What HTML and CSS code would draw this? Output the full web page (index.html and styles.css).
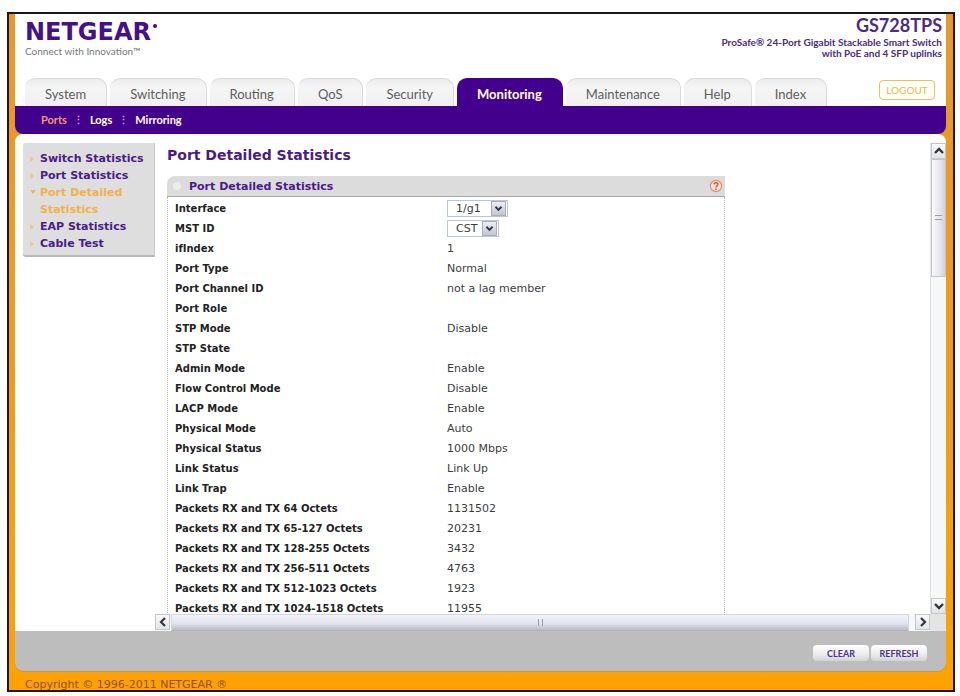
FILE: index.html
```html
<!DOCTYPE html>
<html lang="en">
<head>
<meta charset="utf-8">
<title>NETGEAR GS728TPS</title>
<link rel="stylesheet" href="styles.css">
</head>
<body>
<div class="frame">
  <header class="header">
    <div class="brand">
      <div class="logo">NETGEAR<i class="mark"></i></div>
      <div class="tagline">Connect with Innovation™</div>
    </div>
    <div class="model">
      <div class="model-name">GS728TPS</div>
      <div class="model-text">ProSafe® 24-Port Gigabit Stackable Smart Switch<br>with PoE and 4 SFP uplinks</div>
    </div>
  </header>
  <div class="tab-row">
    <nav class="tabs">
      <a href="#">System</a>
      <a href="#">Switching</a>
      <a href="#">Routing</a>
      <a href="#">QoS</a>
      <a href="#">Security</a>
      <a href="#" class="active">Monitoring</a>
      <a href="#">Maintenance</a>
      <a href="#">Help</a>
      <a href="#">Index</a>
    </nav>
    <button type="button" class="logout">LOGOUT</button>
  </div>
  <div class="panel">
    <nav class="subnav">
      <a href="#" class="active">Ports</a>
      <a href="#">Logs</a>
      <a href="#">Mirroring</a>
    </nav>
    <div class="body">
      <nav class="side">
        <a href="#">Switch Statistics</a>
        <a href="#">Port Statistics</a>
        <a href="#" class="active">Port Detailed Statistics</a>
        <a href="#">EAP Statistics</a>
        <a href="#">Cable Test</a>
      </nav>
      <div class="scroller">
        <main class="content">
          <h1>Port Detailed Statistics</h1>
          <section class="card">
            <div class="card-head">
              <i class="dot"></i>
              <h2>Port Detailed Statistics</h2>
              <button type="button" class="help" aria-label="Help">
                <svg viewBox="0 0 14 14" width="14" height="14"><circle cx="7" cy="7" r="5.6" fill="#fbe6de" stroke="#e88a6c" stroke-width="1.2"/><path d="M5 5.4C5 3.2 9 3.2 9 5.4C9 6.8 7 6.8 7 8.4M7 9.6V11" fill="none" stroke="#e0573a" stroke-width="1.5"/></svg>
              </button>
            </div>
            <table class="stats">
              <tr><th scope="row"><label for="iface">Interface</label></th><td><span class="pick"><select id="iface" class="wide"><option>1/g1</option></select><svg class="arrow" viewBox="0 0 15 15" width="15" height="15"><path d="M4 5.5L7.5 9L11 5.5" fill="none" stroke="#33363f" stroke-width="2.2"/></svg></span></td></tr>
              <tr><th scope="row"><label for="mst">MST ID</label></th><td><span class="pick"><select id="mst" class="narrow"><option>CST</option></select><svg class="arrow" viewBox="0 0 15 15" width="15" height="15"><path d="M4 5.5L7.5 9L11 5.5" fill="none" stroke="#33363f" stroke-width="2.2"/></svg></span></td></tr>
              <tr><th scope="row">ifIndex</th><td>1</td></tr>
              <tr><th scope="row">Port Type</th><td>Normal</td></tr>
              <tr><th scope="row">Port Channel ID</th><td>not a lag member</td></tr>
              <tr><th scope="row">Port Role</th><td></td></tr>
              <tr><th scope="row">STP Mode</th><td>Disable</td></tr>
              <tr><th scope="row">STP State</th><td></td></tr>
              <tr><th scope="row">Admin Mode</th><td>Enable</td></tr>
              <tr><th scope="row">Flow Control Mode</th><td>Disable</td></tr>
              <tr><th scope="row">LACP Mode</th><td>Enable</td></tr>
              <tr><th scope="row">Physical Mode</th><td>Auto</td></tr>
              <tr><th scope="row">Physical Status</th><td>1000 Mbps</td></tr>
              <tr><th scope="row">Link Status</th><td>Link Up</td></tr>
              <tr><th scope="row">Link Trap</th><td>Enable</td></tr>
              <tr><th scope="row">Packets RX and TX 64 Octets</th><td>1131502</td></tr>
              <tr><th scope="row">Packets RX and TX 65-127 Octets</th><td>20231</td></tr>
              <tr><th scope="row">Packets RX and TX 128-255 Octets</th><td>3432</td></tr>
              <tr><th scope="row">Packets RX and TX 256-511 Octets</th><td>4763</td></tr>
              <tr><th scope="row">Packets RX and TX 512-1023 Octets</th><td>1923</td></tr>
              <tr><th scope="row">Packets RX and TX 1024-1518 Octets</th><td>11955</td></tr>
            </table>
          </section>
        </main>
        <div class="vbar">
          <button type="button" class="step" aria-label="Scroll up"><svg viewBox="0 0 14 14" width="14" height="14"><path d="M3 9L7 5L11 9" fill="none" stroke="#33363f" stroke-width="2.4"/></svg></button>
          <div class="vthumb"><i class="grip"></i></div>
          <div class="space"></div>
          <button type="button" class="step" aria-label="Scroll down"><svg viewBox="0 0 14 14" width="14" height="14"><path d="M3 5L7 9L11 5" fill="none" stroke="#33363f" stroke-width="2.4"/></svg></button>
        </div>
        <div class="hbar">
          <button type="button" class="step" aria-label="Scroll left"><svg viewBox="0 0 14 14" width="14" height="14"><path d="M9 3L5 7L9 11" fill="none" stroke="#33363f" stroke-width="2.2"/></svg></button>
          <div class="hthumb"><i class="grip upright"></i></div>
          <button type="button" class="step" aria-label="Scroll right"><svg viewBox="0 0 14 14" width="14" height="14"><path d="M5 3L9 7L5 11" fill="none" stroke="#33363f" stroke-width="2.2"/></svg></button>
        </div>
        <div class="corner"></div>
      </div>
    </div>
    <div class="actions-wrap">
      <div class="actions">
        <button type="button">CLEAR</button>
        <button type="button">REFRESH</button>
      </div>
    </div>
  </div>
  <footer class="footer">Copyright © 1996-2011 NETGEAR ®</footer>
</div>
</body>
</html>
```
FILE: styles.css
```css
* { box-sizing: border-box; }

body {
  margin: 0;
  height: 100vh;
  padding: 12px 5px 4px 7px;
  background: #fff;
  font-family: "DejaVu Sans", sans-serif;
}

a { color: inherit; text-decoration: none; }
button { font-family: inherit; padding: 0; margin: 0; cursor: pointer; }
h1, h2 { margin: 0; color: #4a1a8e; }
svg { display: block; }

.frame {
  height: 100%;
  display: flex;
  flex-direction: column;
  border: 2px solid #1c1614;
  background: linear-gradient(#e8982c, #f09c18 60%, #ffa200);
  padding: 0 7px 0 6px;
}

.header {
  display: flex;
  justify-content: space-between;
  height: 64px;
  flex: none;
  padding: 0 4px 0 10px;
  background: #fff;
  font-family: Lato, sans-serif;
}
.brand { padding-top: 5px; }
.logo {
  display: flex;
  gap: 2px;
  font: 700 24px/26px "DejaVu Sans", sans-serif;
  color: #45108c;
}
.mark { width: 4px; height: 4px; margin-top: 5px; border-radius: 50%; background: #45108c; }
.tagline { font-size: 10px; line-height: 12px; color: #777; }
.model { text-align: right; color: #4b2a8a; }
.model-name { font-size: 18px; line-height: 22px; font-weight: 700; }
.model-text { font-size: 10px; line-height: 11px; font-weight: 700; padding-top: 1px; }

.tab-row {
  display: flex;
  align-items: flex-end;
  justify-content: space-between;
  flex: none;
  padding: 0 11px 0 10px;
  background: #fff;
  font-family: Lato, sans-serif;
}
.tabs { display: flex; gap: 3px; }
.tabs a {
  height: 28px;
  padding: 0 20px;
  line-height: 30px;
  font-size: 13px;
  color: #5e5e5e;
  background: linear-gradient(#ececec, #f5f5f5 30%, #f0f0f0);
  border: solid #dadada;
  border-width: 1px 1px 0 0;
  border-radius: 10px 10px 0 0;
}
.tabs .active { background: #43008c; border-color: #43008c; color: #fff; font-weight: 700; }
.logout {
  width: 56px;
  height: 20px;
  margin-bottom: 6px;
  border: 1px solid #e6bf60;
  border-radius: 4px;
  background: #fffdf4;
  color: #e3b75a;
  font-size: 10px;
}

.panel {
  flex: 1;
  min-height: 0;
  display: flex;
  flex-direction: column;
}
.subnav {
  flex: none;
  display: flex;
  height: 28px;
  padding-left: 26px;
  background: #43008c;
  border-radius: 0 0 8px 8px;
  color: #fff;
  font: 700 11px/28px Lato, sans-serif;
}
.subnav a + a::before { content: "⋮"; padding: 0 6px; color: #b9a3dc; }
.subnav .active { color: #f09a70; }

.body {
  flex: 1;
  min-height: 0;
  display: flex;
  padding-top: 9px;
  background: #fff;
  border-radius: 8px 8px 0 0;
}
.side {
  flex: none;
  width: 132px;
  margin-left: 8px;
  align-self: flex-start;
  padding: 7px 4px 3px 17px;
  background: #dedede;
  border-bottom: 2px solid #b8b8b8;
  border-right: 1px solid #c8c8c8;
  border-radius: 3px 0 0 3px;
  font-size: 11px;
  line-height: 17px;
  font-weight: 700;
  color: #4a1a8e;
}
.side a { display: block; position: relative; }
.side a::before {
  content: "";
  position: absolute;
  left: -10px;
  top: 6px;
  border: solid transparent;
  border-width: 3px 0 3px 4px;
  border-left-color: #e9c98c;
}
.side .active { color: #f3b04a; }
.side .active::before { border-width: 4px 3px 0 3px; border-color: #efb660 transparent transparent; }

.scroller {
  flex: 1;
  min-width: 0;
  display: grid;
  grid-template-columns: minmax(0, 1fr) 16px;
  grid-template-rows: minmax(0, 1fr) 17px;
}
.content { overflow: hidden; padding: 3px 12px; }
h1 { font-size: 14px; line-height: 18px; }
.card { width: 558px; max-width: 100%; margin-top: 12px; }
.card-head {
  display: flex;
  align-items: center;
  height: 21px;
  padding: 0 2px 0 6px;
  background: #dcdcdc;
  border-bottom: 1px solid #a8a8a8;
  border-radius: 8px 0 0 0;
}
.dot { width: 8px; height: 8px; border-radius: 50%; background: #ededed; }
h2 { flex: 1; padding-left: 8px; font-size: 11px; }
.help { border: 0; background: none; }
.stats {
  width: 100%;
  table-layout: fixed;
  border-spacing: 0;
  padding-top: 1px;
  border: 1px dotted #bbb;
  border-width: 0 1px;
  font-size: 10px;
}
.stats th, .stats td { height: 20px; padding: 0; text-align: left; line-height: 18px; color: #222; }
.stats th { width: 279px; padding-left: 7px; white-space: nowrap; }
.stats td { font-size: 11px; color: #3c3c3c; }
.stats tr:first-child th { height: 21px; }

.pick { display: inline-grid; grid-template-columns: 1fr 17px; align-items: center; vertical-align: top; }
select {
  grid-area: 1 / 1 / 2 / 3;
  appearance: none;
  height: 17px;
  margin: 0;
  padding: 0 0 0 8px;
  border: 1px solid #b7c8d4;
  border-radius: 0;
  background: #fff;
  color: #3c3c3c;
  font: 11px "DejaVu Sans", sans-serif;
}
.wide { width: 61px; }
.narrow { width: 52px; }
.arrow {
  grid-area: 1 / 2;
  background: linear-gradient(#eceef4, #c3c6d2);
  border: 1px solid #a9adba;
  pointer-events: none;
}

.vbar { display: flex; flex-direction: column; background: #f6f7f9; border-left: 1px solid #e2e4ea; }
.step {
  display: grid;
  place-items: center;
  flex: none;
  width: 15px;
  height: 16px;
  border: 1px solid #c4c6cc;
  background: linear-gradient(#fafafa, #e2e3e8);
}
.vthumb {
  display: grid;
  place-items: center;
  height: 25%;
  border: 1px solid #c2c4cd;
  background: linear-gradient(90deg, #fafaff, #e6e4ee 60%, #d4d0dc);
}
.space { flex: 1; }
.hbar { display: flex; gap: 1px; background: #f6f7f9; }
.hbar .step:last-child { margin-left: 5px; }
.hthumb {
  flex: 1;
  display: grid;
  place-items: center;
  border: 1px solid #d5d7df;
  border-bottom-color: #b0b2bb;
  background: linear-gradient(#f3f4fa, #e2e4ee 55%, #b9bbc6);
}
.grip { width: 7px; height: 5px; border: solid #999cab; border-width: 1px 0; }
.upright { width: 5px; height: 7px; border-width: 0 1px; }
.corner { background: #e4e4e6; }

.actions-wrap { flex: none; }
.actions {
  display: flex;
  justify-content: flex-end;
  gap: 2px;
  height: 41px;
  padding: 14px 19px 0 0;
  background: #bdbdbd;
  border: solid #a79a78;
  border-width: 0 0 1px;
  border-radius: 0 0 9px 9px;
}
.actions button {
  width: 56px;
  height: 16px;
  border: 0;
  border-radius: 4px;
  background: linear-gradient(#fff, #ebebeb 60%, #d2d2d2);
  color: #4b2f94;
  font: 700 9px Lato, sans-serif;
}
.footer { flex: none; height: 18px; padding-left: 10px; font-size: 11px; line-height: 26px; overflow: hidden; color: #94501c; }
```
